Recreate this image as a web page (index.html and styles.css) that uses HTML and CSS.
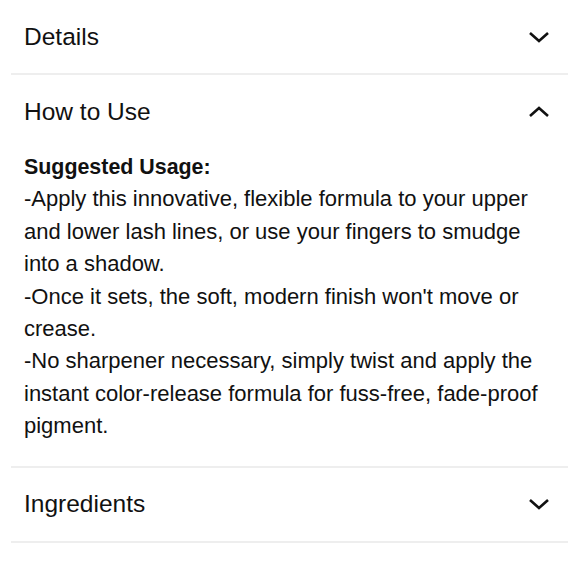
FILE: index.html
```html
<!DOCTYPE html>
<html lang="en">

<head>
    <meta charset="UTF-8">
    <meta name="viewport" content="width=device-width, initial-scale=1.0">
    <title>Product Info</title>
    <link rel="stylesheet" href="styles.css">
</head>

<body>
    <div class="accordion">
        <div class="item">
            <div class="item-head">
                <span>Details</span>
                <svg class="chevron" width="22" height="12" viewBox="0 0 22 12"><path d="M2 2 L11 10 L20 2" /></svg>
            </div>
        </div>
        <div class="item open">
            <div class="item-head">
                <span>How to Use</span>
                <svg class="chevron" width="22" height="12" viewBox="0 0 22 12"><path d="M2 10 L11 2 L20 10" /></svg>
            </div>
            <div class="item-body">
                <strong>Suggested Usage:</strong><br>
                -Apply this innovative, flexible formula to your upper and lower lash lines, or use your fingers to smudge into a shadow.<br>
                -Once it sets, the soft, modern finish won't move or crease.<br>
                -No sharpener necessary, simply twist and apply the instant color-release formula for fuss-free, fade-proof pigment.
            </div>
        </div>
        <div class="item">
            <div class="item-head">
                <span>Ingredients</span>
                <svg class="chevron" width="22" height="12" viewBox="0 0 22 12"><path d="M2 2 L11 10 L20 2" /></svg>
            </div>
        </div>
    </div>
</body>

</html>
```

FILE: styles.css
```css
body {
    margin: 0;
    font-family: "Liberation Sans", Arial, sans-serif;
    background-color: #ffffff;
    color: #111111;
}

.accordion {
    padding: 0 12px 0 11px;
}

.item {
    border-bottom: 2px solid #eeeeee;
}

.item-head {
    display: flex;
    align-items: center;
    justify-content: space-between;
    height: 73px;
    padding: 0 18px 0 13px;
    font-size: 24.5px;
}

.chevron {
    fill: none;
    stroke: #111111;
    stroke-width: 2.6;
}

.item-body {
    padding: 0 20px 23px 13px;
    margin-top: 3px;
    font-size: 22px;
    line-height: 32.4px;
}

.item-body strong {
    font-size: 21.4px;
    font-weight: bold;
}
```
